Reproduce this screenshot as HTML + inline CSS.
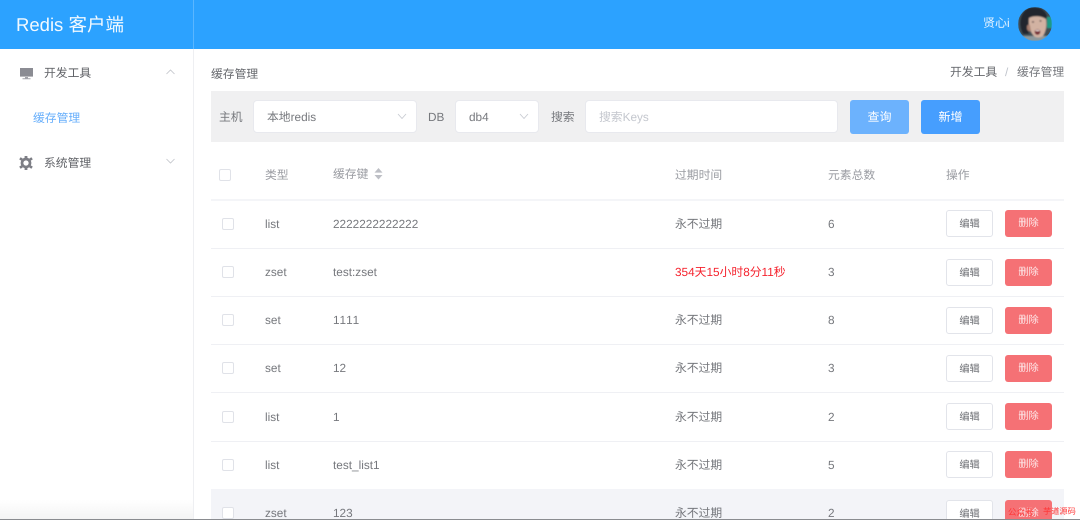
<!DOCTYPE html>
<html lang="zh"><head><meta charset="utf-8"><title>Redis 客户端</title>
<style>
*{box-sizing:border-box;margin:0;padding:0}
html,body{width:1080px;height:520px;overflow:hidden;background:#fff}
#w{position:absolute;left:0;top:0;width:1080px;height:520px;overflow:hidden;background:#fff;filter:blur(.35px);font-family:"Liberation Sans","Noto Sans CJK SC",sans-serif;font-size:11.8px;color:#76787d;text-rendering:geometricPrecision}
.a{position:absolute;white-space:nowrap}
.t{position:absolute;white-space:nowrap;line-height:16px;height:16px;margin-top:1px}
.cb{position:absolute;width:12px;height:12px;border:1px solid #e0e2e8;border-radius:2px;background:#fff}
.line{position:absolute;left:211px;width:853px;height:1px;background:#eff0f4}
.sel{position:absolute;top:100px;height:33px;background:#fff;border:1px solid #e8e9ee;border-radius:4px}
.btn{position:absolute;border-radius:3px;text-align:center;color:#fff;font-size:12px}
.ed{position:absolute;left:946px;width:47px;height:27px;background:#fff;border:1px solid #e2e4ea;border-radius:3px;text-align:center;line-height:27px;font-size:10.2px;color:#6c6e73}
.de{position:absolute;left:1005px;width:47px;height:27px;background:#f57175;border-radius:3px;text-align:center;line-height:28px;font-size:10.2px;color:#fde6e7}
</style></head><body><div id="w">
<div class="a" style="left:0;top:0;width:1080px;height:49px;background:#2ca2ff"></div>
<div class="a" style="left:193px;top:0;width:1px;height:49px;background:#5ab6ff"></div>
<div class="a" style="left:16px;top:12px;font-size:18.5px;line-height:25px;color:#f2f9ff">Redis 客户端</div>
<div class="a" style="left:983px;top:15px;font-size:12px;line-height:17px;color:#e8f4ff">贤心i</div>
<svg class="a" style="left:1018px;top:7px" width="34" height="34" viewBox="0 0 34 34">
<defs><clipPath id="c"><circle cx="17" cy="17" r="17"/></clipPath><filter id="b" x="-10%" y="-10%" width="120%" height="120%"><feGaussianBlur stdDeviation=".7"/></filter></defs>
<g clip-path="url(#c)"><g filter="url(#b)">
<rect width="34" height="34" fill="#3f4d55"/>
<rect x="29" y="10" width="5" height="11" fill="#1f9a86"/>
<rect x="0" y="29" width="34" height="5" fill="#8b989c"/>
<path d="M5 27C0 17 2 5 11 1c7-2 16 0 18 8l-1 3c-5-3-12-3-16-1-1 4-2 10-1 16z" fill="#24262e"/>
<path d="M11 11c5-3 13-2 17 1 1 7 0 12-3 17-3 2-7 2-9 0-4-4-6-11-5-18z" fill="#d2b2a2"/>
<path d="M9 19c1-2 3-2 3 0l1 5c-2 1-3 0-4-2z" fill="#a87f6f"/>
<ellipse cx="19.5" cy="25" rx="2.8" ry="2.8" fill="#742a30"/>
<ellipse cx="19.5" cy="23.6" rx="2" ry=".7" fill="#eadfdb"/>
<ellipse cx="15" cy="15" rx="1.2" ry=".7" fill="#5a4a4c"/><ellipse cx="22.5" cy="14" rx="1.1" ry=".7" fill="#5a4a4c"/>
</g></g></svg>

<div class="a" style="left:193px;top:49px;width:1px;height:471px;background:#eeeff2"></div>

<svg class="a" style="left:20px;top:67px" width="13" height="13" viewBox="0 0 13 13"><path d="M0 1h13v8.6H0z" fill="#8b8c93"/><path d="M5 10h3v1.2H5zM2.5 11.2h8v1h-8z" fill="#a3a4aa"/></svg>
<div class="t" style="left:44px;top:64px;color:#606267">开发工具</div>
<svg class="a" style="left:166px;top:69px" width="9" height="6" viewBox="0 0 9 6"><path d="M.5 5L4.5 1l4 4" fill="none" stroke="#c0c3c9" stroke-width=".8"/></svg>
<div class="t" style="left:33px;top:109px;color:#66aefb">缓存管理</div>
<svg class="a" style="left:19px;top:156px" width="14" height="14" viewBox="0 0 14 14"><circle cx="7" cy="7" r="4" fill="none" stroke="#7d7e85" stroke-width="2.7"/><path d="M5.6 0h2.8v2.5H5.6zM5.6 11.5h2.8V14H5.6zM.2 3.4l1.4-2.2 2.2 1.3-1.4 2.2zM10.2 11.5l1.4-2.2 2.2 1.3-1.4 2.2zM.2 10.6l2.2-1.3 1.4 2.2-2.2 1.3zM10.2 2.5l2.2-1.3 1.4 2.2-2.2 1.3z" fill="#7d7e85"/></svg>
<div class="t" style="left:44px;top:154px;color:#606267">系统管理</div>
<svg class="a" style="left:166px;top:158px" width="9" height="6" viewBox="0 0 9 6"><path d="M.5 1l4 4 4-4" fill="none" stroke="#c0c3c9" stroke-width=".8"/></svg>

<div class="t" style="left:211px;top:65px;color:#66686d">缓存管理</div>
<div class="t" style="left:950px;top:63px;color:#66686d">开发工具</div>
<div class="t" style="left:1005px;top:63px;color:#c0c4cc">/</div>
<div class="t" style="left:1017px;top:63px;color:#76787d">缓存管理</div>

<div class="a" style="left:211px;top:91px;width:853px;height:51px;background:#f0f0f1"></div>
<div class="t" style="left:219px;top:108px">主机</div>
<div class="sel" style="left:253px;width:164px"></div>
<div class="t" style="left:267px;top:108px">本地redis</div>
<svg class="a" style="left:397px;top:113px" width="10" height="7" viewBox="0 0 10 7"><path d="M1 1l4 4.5L9 1" fill="none" stroke="#c8cbd2" stroke-width=".9"/></svg>
<div class="t" style="left:428px;top:108px">DB</div>
<div class="sel" style="left:455px;width:84px"></div>
<div class="t" style="left:469px;top:108px">db4</div>
<svg class="a" style="left:519px;top:113px" width="10" height="7" viewBox="0 0 10 7"><path d="M1 1l4 4.5L9 1" fill="none" stroke="#c8cbd2" stroke-width=".9"/></svg>
<div class="t" style="left:551px;top:108px">搜索</div>
<div class="sel" style="left:585px;width:253px"></div>
<div class="t" style="left:599px;top:108px;color:#c4c7ce">搜索Keys</div>
<div class="btn" style="left:850px;top:100px;width:59px;height:34px;line-height:35px;background:#6cb2fd">查询</div>
<div class="btn" style="left:921px;top:100px;width:59px;height:34px;line-height:35px;background:#469efe">新增</div>

<div class="cb" style="left:219px;top:169px"></div>
<div class="t" style="left:265px;top:166px;color:#9a9ca2">类型</div>
<div class="t" style="left:333px;top:165px;color:#9a9ca2">缓存键</div>
<svg class="a" style="left:374px;top:168px" width="9" height="12" viewBox="0 0 9 12"><path d="M4.5 0L8.5 4.6H.5z" fill="#bdbfc5"/><path d="M4.5 11.5L.5 7h8z" fill="#bdbfc5"/></svg>
<div class="t" style="left:675px;top:166px;color:#9a9ca2">过期时间</div>
<div class="t" style="left:828px;top:166px;color:#9a9ca2">元素总数</div>
<div class="t" style="left:946px;top:166px;color:#9a9ca2">操作</div>
<div class="line" style="top:199px;height:2px;background:#f4f5f8"></div>

<div class="cb" style="left:222px;top:218px"></div><div class="t" style="left:265px;top:215px">list</div><div class="t" style="left:333px;top:215px">2222222222222</div><div class="t" style="left:675px;top:215px">永不过期</div><div class="t" style="left:828px;top:215px">6</div><div class="ed" style="top:210px">编辑</div><div class="de" style="top:210px">删除</div>
<div class="line" style="top:248px"></div>

<div class="cb" style="left:222px;top:266px"></div><div class="t" style="left:265px;top:263px">zset</div><div class="t" style="left:333px;top:263px">test:zset</div><div class="t" style="left:675px;top:263px;color:#f5222d">354天15小时8分11秒</div><div class="t" style="left:828px;top:263px">3</div><div class="ed" style="top:259px">编辑</div><div class="de" style="top:259px">删除</div>
<div class="line" style="top:296px"></div>

<div class="cb" style="left:222px;top:314px"></div><div class="t" style="left:265px;top:311px">set</div><div class="t" style="left:333px;top:311px;font-kerning:none">1111</div><div class="t" style="left:675px;top:311px">永不过期</div><div class="t" style="left:828px;top:311px">8</div><div class="ed" style="top:307px">编辑</div><div class="de" style="top:307px">删除</div>
<div class="line" style="top:344px"></div>

<div class="cb" style="left:222px;top:362px"></div><div class="t" style="left:265px;top:359px">set</div><div class="t" style="left:333px;top:359px">12</div><div class="t" style="left:675px;top:359px">永不过期</div><div class="t" style="left:828px;top:359px">3</div><div class="ed" style="top:355px">编辑</div><div class="de" style="top:355px">删除</div>
<div class="line" style="top:392px"></div>

<div class="cb" style="left:222px;top:411px"></div><div class="t" style="left:265px;top:408px">list</div><div class="t" style="left:333px;top:408px">1</div><div class="t" style="left:675px;top:408px">永不过期</div><div class="t" style="left:828px;top:408px">2</div><div class="ed" style="top:403px">编辑</div><div class="de" style="top:403px">删除</div>
<div class="line" style="top:441px"></div>

<div class="cb" style="left:222px;top:459px"></div><div class="t" style="left:265px;top:456px">list</div><div class="t" style="left:333px;top:456px">test_list1</div><div class="t" style="left:675px;top:456px">永不过期</div><div class="t" style="left:828px;top:456px">5</div><div class="ed" style="top:451px">编辑</div><div class="de" style="top:451px">删除</div>

<div class="a" style="left:211px;top:489px;width:853px;height:31px;background:#f3f4f8"></div>
<div class="cb" style="left:222px;top:507px"></div><div class="t" style="left:265px;top:504px">zset</div><div class="t" style="left:333px;top:504px">123</div><div class="t" style="left:675px;top:504px">永不过期</div><div class="t" style="left:828px;top:504px">2</div><div class="ed" style="top:500px">编辑</div><div class="de" style="top:500px">删除</div>
<div class="a" style="left:1008px;top:505px;font-size:8.5px;line-height:14px;color:#f33">公众号</div>
<div class="a" style="left:1043px;top:505px;font-size:8.2px;line-height:14px;color:#f33">芋道源码</div>

<div class="a" style="left:0;top:500px;width:193px;height:19px;background:linear-gradient(#fff,#f4f4f4)"></div>
<div class="a" style="left:0;top:519px;width:1080px;height:1px;background:#8a8c90"></div>
</div></body></html>
